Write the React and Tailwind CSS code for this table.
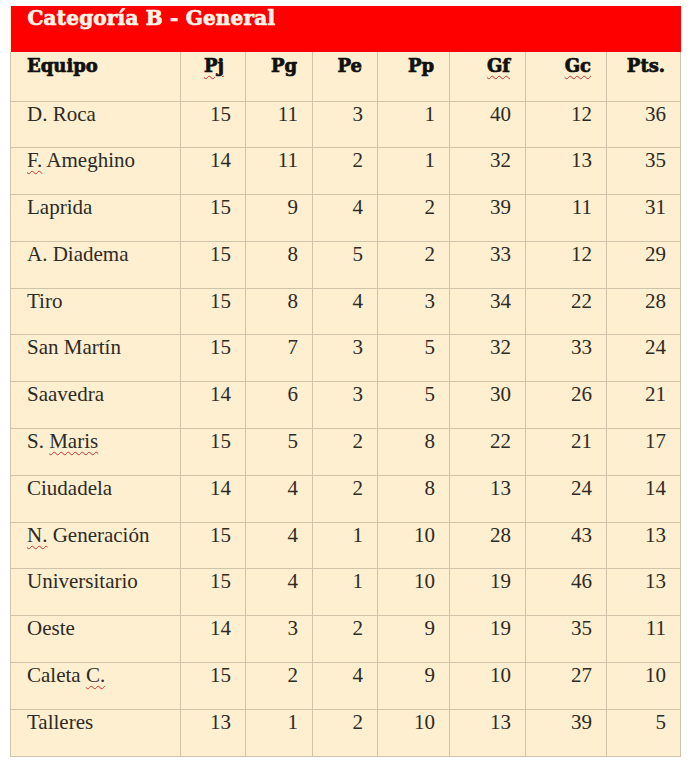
const rows = [
  ["D. Roca", 15, 11, 3, 1, 40, 12, 36],
  ["F. Ameghino", 14, 11, 2, 1, 32, 13, 35],
  ["Laprida", 15, 9, 4, 2, 39, 11, 31],
  ["A. Diadema", 15, 8, 5, 2, 33, 12, 29],
  ["Tiro", 15, 8, 4, 3, 34, 22, 28],
  ["San Martín", 15, 7, 3, 5, 32, 33, 24],
  ["Saavedra", 14, 6, 3, 5, 30, 26, 21],
  ["S. Maris", 15, 5, 2, 8, 22, 21, 17],
  ["Ciudadela", 14, 4, 2, 8, 13, 24, 14],
  ["N. Generación", 15, 4, 1, 10, 28, 43, 13],
  ["Universitario", 15, 4, 1, 10, 19, 46, 13],
  ["Oeste", 14, 3, 2, 9, 19, 35, 11],
  ["Caleta C.", 15, 2, 4, 9, 10, 27, 10],
  ["Talleres", 13, 1, 2, 10, 13, 39, 5],
];

const widths = [170, 65, 67, 65, 72, 76, 81, 74];

// words the spell checker flagged in the original document
const squiggle = "underline decoration-wavy decoration-[#d0312d] decoration-1 underline-offset-[3px]";

function TeamName({ name }) {
  if (name === "F. Ameghino") return <><span className={squiggle}>F.</span> Ameghino</>;
  if (name === "N. Generación") return <><span className={squiggle}>N.</span> Generación</>;
  if (name === "S. Maris") return <>S. <span className={squiggle}>Maris</span></>;
  if (name === "Caleta C.") return <>Caleta <span className={squiggle}>C.</span></>;
  return name;
}

const heads = [
  { label: "Equipo", left: true },
  { label: "Pj", wavy: true, pr: "pr-[21px]" },
  { label: "Pg" },
  { label: "Pe" },
  { label: "Pp" },
  { label: "Gf", wavy: true },
  { label: "Gc", wavy: true },
  { label: "Pts." },
];

export default function App() {
  return (
    <div className="min-h-[768px] w-[690px] bg-white pt-[6px] pl-[10px]">
      <table className="table-fixed border-collapse bg-[#fdefcf] text-[#2e2a26]" style={{ width: 671 }}>
        <colgroup>
          {widths.map((w, i) => (
            <col key={i} style={{ width: w }} />
          ))}
        </colgroup>
        <thead>
          <tr>
            <th colSpan={8} className="h-[46px] bg-[#fe0000] p-0 pl-[17px] text-left align-top">
              <span className="block pt-0 text-[20px] leading-[24px] font-bold tracking-[0.2px] text-[#fdf3e6] [font-family:'DejaVu_Serif',serif] [-webkit-text-stroke:0.7px_#fdf3e6]">
                Categoría B - General
              </span>
            </th>
          </tr>
          <tr className="h-[49px]">
            {heads.map((h, i) => (
              <th
                key={i}
                className={`border border-[#cfc4aa] border-t-0 align-top pt-[2px] text-[18px] leading-[24px] font-bold text-[#111] [font-family:'DejaVu_Serif',serif] [-webkit-text-stroke:0.7px_#111] ${h.left ? "pl-[16px] text-left" : `text-right ${h.pr || "pr-[15px]"}`}`}
              >
                <span className={h.wavy ? squiggle : ""}>{h.label}</span>
              </th>
            ))}
          </tr>
        </thead>
        <tbody className="[font-family:'Liberation_Serif',serif] text-[21px] leading-[24px]">
          {rows.map((r) => (
            <tr key={r[0]} className="h-[46.8px]">
              {r.map((v, i) => (
                <td
                  key={i}
                  className={`border border-[#cfc4aa] align-top pt-0 ${i === 0 ? "pl-[16px] text-left" : "pr-[14px] text-right"}`}
                >
                  {i === 0 ? <TeamName name={v} /> : v}
                </td>
              ))}
            </tr>
          ))}
        </tbody>
      </table>
    </div>
  );
}
